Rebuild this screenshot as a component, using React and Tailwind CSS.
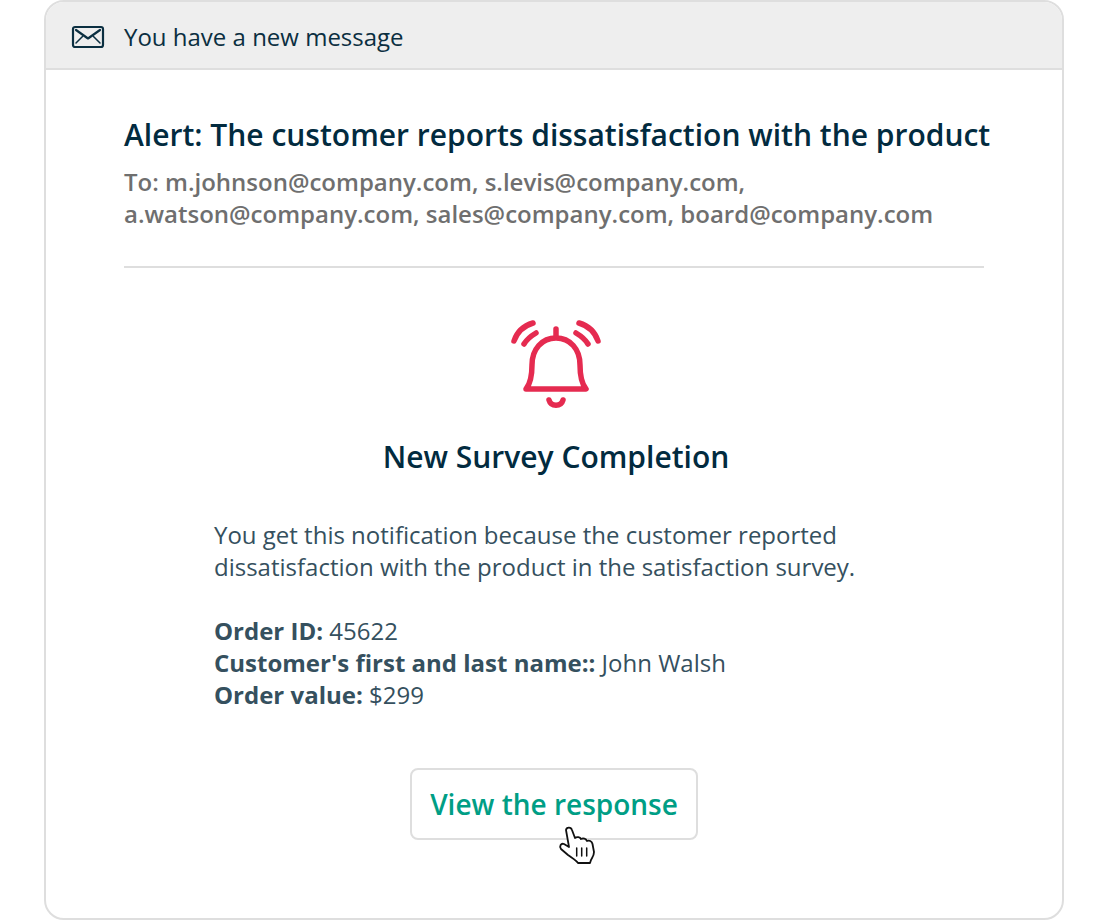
import React from 'react';

const MailIcon = () => (
    <svg width="34" height="24" viewBox="0 0 34 24" fill="none" stroke="#0b2f41" strokeLinecap="round" strokeLinejoin="round">
        <rect x="2" y="2" width="30" height="20" rx="2" strokeWidth="2.2" />
        <path d="M5 5 L17 13.5 L29 5" strokeWidth="2.2" />
        <path d="M5 18 L11.5 11.5 M29 18 L22.5 11.5" strokeWidth="1.5" />
    </svg>
);

const BellIcon = () => (
    <svg width="120" height="110" viewBox="0 0 120 110" fill="none" stroke="#e52b50" strokeWidth="5.5" strokeLinecap="round" strokeLinejoin="round">
        <path d="M31 80 C36 74 37 66 37 56 C37 40 47 29 61 29 C75 29 85 40 85 56 C85 66 86 74 91 80 Z" />
        <path d="M61 20 V27" />
        <path d="M54 91 C56 98 66 98 68 91" />
        <path d="M19 32 C22 23 28 17 38 14" />
        <path d="M29 35 C32 30 36 27 41 24" />
        <path d="M103 32 C100 23 94 17 84 14" />
        <path d="M93 35 C90 30 86 27 81 24" />
    </svg>
);

const HandCursor = () => (
    <svg width="42" height="42" viewBox="0 0 42 42" fill="#fff" stroke="#111" strokeWidth="1.8" strokeLinejoin="round" strokeLinecap="round">
        <path d="M10 6 C10.5 3 15 2.5 16 6 L19 14 C21 12.5 24 13 25 15 C27 14 30 14.5 31 17 C33 16 36 17 36.5 20 L38 28 C38 32 36 34 35 36 L34 39 L22 39 C20 36 16 34 12 31 L5 25 C3 22 5 19 8 20 L13 23 Z" />
        <path d="M20.7 24 V32 M25.7 24 V32 M30.7 24 V32" strokeWidth="1.5" />
    </svg>
);

export default function App() {
    return (
        <div className="w-[1108px] h-[920px] bg-white px-[44px] font-['Open_Sans',sans-serif]">
            <div className="h-[920px] rounded-[20px] border-2 border-[#dedede] overflow-hidden flex flex-col">
                <div className="h-[68px] shrink-0 bg-[#eeeeee] border-b-2 border-[#dedede] flex items-center pl-[25px] gap-[19px] pt-[3px]">
                    <MailIcon />
                    <span className="text-[24px] text-[#0b2f41]">You have a new message</span>
                </div>

                <div className="flex-1 px-[78px] pt-[45px]">
                    <h1 className="text-[30px] leading-[40px] font-semibold text-[#022b3f] whitespace-nowrap">
                        Alert: The customer reports dissatisfaction with the product
                    </h1>
                    <p className="mt-[11px] text-[24px] leading-[32px] font-semibold text-[#6f6f6f]">
                        To: m.johnson@company.com, s.levis@company.com,<br />
                        a.watson@company.com, sales@company.com, board@company.com
                    </p>
                    <div className="mt-[36px] w-[860px] h-[2px] bg-[#dedede]" />

                    <div className="w-[864px] flex flex-col items-center">
                        <div className="mt-[41px] h-[110px] flex justify-center mr-[2px]">
                            <BellIcon />
                        </div>
                        <h2 className="mt-[17px] text-[30px] leading-[42px] font-semibold text-[#022b3f]">New Survey Completion</h2>
                    </div>

                    <div className="mt-[41px] pl-[90px] text-[24px] leading-[32px] text-[#35505e]">
                        <p>
                            You get this notification because the customer reported<br />
                            dissatisfaction with the product in the satisfaction survey.
                        </p>
                        <p className="mt-[32px]"><b className="font-bold">Order ID:</b> 45622</p>
                        <p><b className="font-bold">Customer's first and last name::</b> John Walsh</p>
                        <p><b className="font-bold">Order value:</b> $299</p>
                    </div>

                    <div className="w-[860px] mt-[57px] flex justify-center">
                        <div className="relative">
                            <button className="h-[72px] w-[288px] rounded-[8px] border-2 border-[#dedede] bg-white text-[28px] font-semibold text-[#009e85]">
                                View the response
                            </button>
                            <div className="absolute left-[146px] top-[56px]">
                                <HandCursor />
                            </div>
                        </div>
                    </div>
                </div>
            </div>
        </div>
    );
}
